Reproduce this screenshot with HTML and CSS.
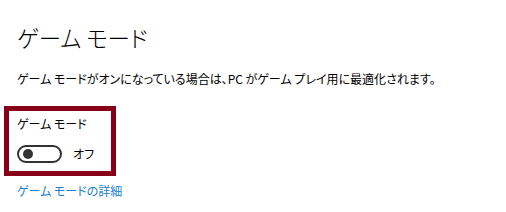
FILE: index.html
```html
<!DOCTYPE html>
<html lang="ja">
<head>
  <meta charset="UTF-8">
  <title>ゲーム モード</title>
  <link rel="stylesheet" href="styles.css">
</head>
<body>
  <div class="page">
    <h1 class="title">ゲーム モード</h1>
    <p class="desc">ゲーム モードがオンになっている場合は、PC がゲーム プレイ用に最適化されます。</p>

    <div class="setting">
      <div class="setting-label">ゲーム モード</div>
      <div class="toggle-row">
        <span class="toggle"><span class="knob"></span></span>
        <span class="toggle-state">オフ</span>
      </div>
    </div>

    <a class="more-link" href="#">ゲーム モードの詳細</a>
  </div>
</body>
</html>
```

FILE: styles.css
```css
* {
  box-sizing: border-box;
}
body {
  margin: 0;
  background-color: #fff;
  color: #000;
  font-family: "Noto Sans CJK JP", "Noto Sans", sans-serif;
  font-feature-settings: "palt";
}
.page {
  padding: 21px 0 0 17px;
}
.title {
  margin: 0;
  font-size: 22.5px;
  font-weight: 300;
  line-height: 32px;
}
.desc {
  margin: 16px 0 0;
  font-size: 12px;
  line-height: 20px;
}
.setting {
  display: inline-block;
  margin: 17px 0 0 -13px;
  width: 112px;
  padding: 3px 8px 7px 8px;
  border: 5px solid #880018;
}
.setting-label {
  font-size: 12px;
  line-height: 20px;
}
.toggle-row {
  display: flex;
  align-items: center;
  gap: 11px;
  margin-top: 10px;
}
.toggle {
  display: flex;
  align-items: center;
  width: 45px;
  height: 18px;
  border: 2px solid #333;
  border-radius: 10px;
  padding-left: 4px;
  flex-shrink: 0;
}
.knob {
  width: 10px;
  height: 10px;
  border-radius: 50%;
  background-color: #333;
}
.toggle-state {
  font-size: 12px;
  line-height: 20px;
}
.more-link {
  display: block;
  margin-top: 5px;
  font-size: 12px;
  line-height: 20px;
  color: #1a7fd0;
  text-decoration: none;
}
```
